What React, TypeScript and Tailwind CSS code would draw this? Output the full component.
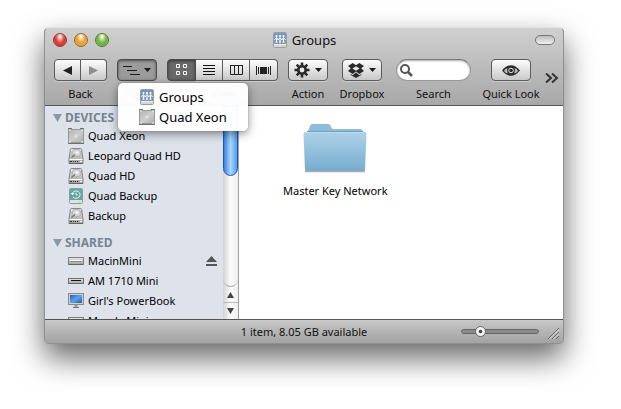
import type { ReactNode } from "react";

type IconName =
  | "volume"
  | "server"
  | "disk"
  | "backup"
  | "mini"
  | "miniDark"
  | "display";

type Item = { title: string; icon: IconName; eject?: boolean };

const devices: Item[] = [
  { title: "Quad Xeon", icon: "volume" },
  { title: "Leopard Quad HD", icon: "disk" },
  { title: "Quad HD", icon: "disk" },
  { title: "Quad Backup", icon: "backup" },
  { title: "Backup", icon: "disk" },
];

const shared: Item[] = [
  { title: "MacinMini", icon: "mini", eject: true },
  { title: "AM 1710 Mini", icon: "miniDark" },
  { title: "Girl's PowerBook", icon: "display" },
  { title: "Mandy Mini", icon: "mini" },
];

const button =
  "flex h-[22px] items-center justify-center border border-[#5c5c5c] bg-linear-to-b from-[#fdfdfd] to-[#c9c9c9] shadow-[0_1px_0_#cfcfcf]";
const pressed =
  "flex h-[22px] items-center justify-center border border-[#4a4a4a] shadow-[inset_0_1px_3px_#00000080]";

function ItemIcon({ name }: { name: IconName }) {
  return (
    <svg width="16" height="16" viewBox="0 0 16 16" className="shrink-0" aria-hidden="true">
      <defs>
        <linearGradient id="metal" x1="0" y1="0" x2="1" y2="1">
          <stop offset="0" stopColor="#b2b2b2" />
          <stop offset="0.5" stopColor="#cdcdcd" />
          <stop offset="1" stopColor="#adadad" />
        </linearGradient>
        <linearGradient id="silver" x1="0" y1="0" x2="0" y2="1">
          <stop offset="0" stopColor="#eaeaea" />
          <stop offset="1" stopColor="#a0a0a0" />
        </linearGradient>
        <linearGradient id="screen" x1="0" y1="0" x2="1" y2="1">
          <stop offset="0" stopColor="#2460b8" />
          <stop offset="0.5" stopColor="#5ba4ea" />
          <stop offset="1" stopColor="#1d56b0" />
        </linearGradient>
      </defs>
      {name === "volume" && (
        <>
          <rect x=".5" y="1.500" width="15" height="13" fill="url(#metal)" stroke="#989898" />
          <path d="M0 .5h4M12 .5h4M0 15.500h16" stroke="#6f6f6f" />
          <path d="M1 2h2M13 2h2M1 14h2M13 14h2" stroke="#f0f0f0" />
          <circle cx="8" cy="8" r="1.500" fill="#e4e4e4" />
        </>
      )}
      {name === "server" && (
        <>
          <rect x="1.500" y=".5" width="13" height="15" rx="1" fill="#d3d7db" stroke="#9b9fa3" />
          <rect x="2" y="1" width="12" height="11" fill="#7896ba" />
          <g fill="#fff">
            <circle cx="4.500" cy="4" r="1.100" />
            <circle cx="8" cy="4" r="1.100" />
            <circle cx="11.500" cy="4" r="1.100" />
          </g>
          <path d="M2.500 8l2-2.500L6.200 8 8 5.500 9.800 8l1.700-2.500 2 2.500" fill="none" stroke="#fff" />
          <path d="M4.500 5L3.500 11h.8l.2-2 .2 2h.8zM8 5L7 11h.8L8 9l.2 2H9zM11.500 5l-1 6h.8l.2-2 .2 2h.8z" fill="#fff" />
          <path d="M2 12.500h12" stroke="#f0f0f0" />
          <path d="M11 14.300h2" stroke="#e5e500" strokeWidth="1.500" />
        </>
      )}
      {name === "disk" && (
        <>
          <path d="M3.500.5h9q1 0 1.100 1l1.400 9.500v4.500H1V11L2.400 1.500q.1-1 1.100-1z" fill="url(#silver)" stroke="#858585" />
          <ellipse cx="8.500" cy="5" rx="4.500" ry="3.700" fill="#d4d4d4" stroke="#a3a3a3" strokeWidth=".8" />
          <ellipse cx="9" cy="4.500" rx="1.500" ry="1.200" fill="#f7f7f7" />
          <path d="M3.500 9.500l3.500-3" stroke="#777" strokeWidth="1.300" />
          <path d="M1.500 11.500h13" stroke="#fafafa" />
          <path d="M2 13.500h2M5 13.500h1M7 13.500h1M9 13.500h1" stroke="#2f2f2f" />
          <path d="M12 13.500h2" stroke="#fff" />
          <path d="M1 15.500h14" stroke="#666" />
        </>
      )}
      {name === "backup" && (
        <>
          <rect x="1.500" y=".5" width="13" height="15" rx="1" fill="#dde3e3" stroke="#8d9b9b" />
          <rect x="2" y="1" width="12" height="11" fill="#62a5a2" />
          <path d="M4.500 5A4 3.700 0 1 1 5 9" fill="none" stroke="#e9f4f3" />
          <path d="M2.800 5l1.700 2.300L6.300 5z" fill="#fff" />
          <path d="M8 4.500V7h2" fill="none" stroke="#fff" strokeWidth=".8" />
          <path d="M11 14h2" stroke="#e5d800" />
        </>
      )}
      {name === "mini" && (
        <>
          <rect x=".5" y="4.500" width="15" height="7" fill="url(#silver)" stroke="#808080" />
          <path d="M2 7.500h12" stroke="#fff" />
          <path d="M2 8.500h12" stroke="#8a8a8a" />
          <path d="M1 11.500h14" stroke="#666" />
        </>
      )}
      {name === "miniDark" && (
        <>
          <rect x=".5" y="5.500" width="15" height="5" fill="url(#silver)" stroke="#6f6f6f" />
          <path d="M3 7.500h10" stroke="#111" />
        </>
      )}
      {name === "display" && (
        <>
          <rect x=".5" y=".5" width="15" height="11" fill="#cfcfcf" stroke="#8b8b8b" />
          <rect x="2" y="2" width="12" height="8" fill="url(#screen)" />
          <path d="M6.500 12h3v2h-3z" fill="#999" />
          <path d="M5 14.500h6" stroke="#777" />
        </>
      )}
    </svg>
  );
}

function Caret() {
  return (
    <svg width="7" height="4" viewBox="0 0 7 4" aria-hidden="true">
      <path d="M0 0h7L3.500 4z" fill="#1c1c1c" />
    </svg>
  );
}

function ToolItem({ label, width, children }: { label: string; width: string; children: ReactNode }) {
  return (
    <div className={`relative flex shrink-0 flex-col items-center gap-[5px] ${width}`}>
      {children}
      <span className="whitespace-nowrap text-[#111]">{label}</span>
    </div>
  );
}

function TitleBar() {
  return (
    <div className="flex h-6 items-center px-2">
      <div className="flex flex-1 gap-[7px]">
        <button aria-label="Close" className="size-[14px] rounded-full border border-[#8c3a36] bg-[radial-gradient(ellipse_at_50%_20%,#ffe5e2_8%,#e8504b_45%,#d8312e_65%,#ffaaa2_100%)]" />
        <button aria-label="Minimize" className="size-[14px] rounded-full border border-[#96652c] bg-[radial-gradient(ellipse_at_50%_20%,#fff1d8_8%,#eda544_45%,#e89a35_65%,#fff08f_100%)]" />
        <button aria-label="Zoom" className="size-[14px] rounded-full border border-[#4d7935] bg-[radial-gradient(ellipse_at_50%_20%,#effbe0_8%,#7cbc52_45%,#6cad45_65%,#d3f79c_100%)]" />
      </div>
      <h1 className="flex items-center gap-1 text-[13px] leading-4 text-[#111]">
        <ItemIcon name="server" />
        Groups
      </h1>
      <div className="flex flex-1 justify-end">
        <button aria-label="Toggle toolbar" className="h-[10px] w-5 rounded-full border border-[#777] bg-linear-to-b from-[#bdbdbd] to-[#f0f0f0]" />
      </div>
    </div>
  );
}

function PathMenu() {
  return (
    <ul className="absolute top-6 left-px z-10 flex w-[130px] flex-col rounded-[5px] bg-white/97 py-1 text-[13px] leading-5 text-black shadow-[0_3px_10px_#00000070,0_0_1px_#00000080]">
      <li>
        <button className="flex h-5 w-full items-center gap-1 pl-[21px]">
          <ItemIcon name="server" />
          Groups
        </button>
      </li>
      <li>
        <button className="flex h-5 w-full items-center gap-1 pl-[21px]">
          <ItemIcon name="volume" />
          Quad Xeon
        </button>
      </li>
    </ul>
  );
}

function Toolbar() {
  return (
    <div className="flex gap-[10px] pt-[7px] pr-1 pl-[9px]">
      <ToolItem label="Back" width="w-[53px]">
        <div className="flex w-full">
          <button aria-label="Back" className={`${button} w-[27px] rounded-l-[4px]`}>
            <svg width="9" height="9" viewBox="0 0 9 9"><path d="M9 0v9L0 4.500z" fill="#222" /></svg>
          </button>
          <button aria-label="Forward" className={`${button} w-[26px] rounded-r-[4px] border-l-0`}>
            <svg width="9" height="9" viewBox="0 0 9 9"><path d="M0 0v9l9-4.500z" fill="#8f8f8f" /></svg>
          </button>
        </div>
      </ToolItem>
      <ToolItem label="Path" width="w-10">
        <button aria-label="Path" className={`${pressed} w-10 gap-1 rounded-[4px] bg-[#9b9b9b]`}>
          <svg width="17" height="11" viewBox="0 0 17 11">
            <path d="M0 1.500h9M4 5.500h10M7 9.500h10" stroke="#1c1c1c" />
          </svg>
          <Caret />
        </button>
        <PathMenu />
      </ToolItem>
      <ToolItem label="View" width="w-[111px]">
        <div className="flex w-full">
          <button aria-label="Icon view" className={`${pressed} w-[29px] rounded-l-[4px] bg-[#696969]`}>
            <svg width="12" height="12" viewBox="0 0 12 12" fill="none" stroke="#fff">
              <path d="M.5.5h3v3h-3zM7.500.5h3v3h-3zM.5 7.500h3v3h-3zM7.500 7.500h3v3h-3z" />
            </svg>
          </button>
          <button aria-label="List view" className={`${button} w-[27px] border-l-0`}>
            <svg width="12" height="11" viewBox="0 0 12 11"><path d="M0 .5h12M0 3.500h12M0 6.500h12M0 9.500h12" stroke="#111" /></svg>
          </button>
          <button aria-label="Column view" className={`${button} w-[27px] border-l-0`}>
            <svg width="13" height="10" viewBox="0 0 13 10"><path d="M.5 0v9.500h12V0M4.500 0v9M8.500 0v9M0 .5h13" stroke="#222" fill="none" /></svg>
          </button>
          <button aria-label="Cover flow" className={`${button} w-7 rounded-r-[4px] border-l-0`}>
            <svg width="15" height="9" viewBox="0 0 15 9">
              <path d="M.5 0v9M2.500 1v7M12.500 1v7M14.500 0v9" stroke="#222" />
              <path d="M4 1h7v7H4z" fill="#222" />
            </svg>
          </button>
        </div>
      </ToolItem>
      <ToolItem label="Action" width="w-10">
        <button aria-label="Action" className={`${button} w-10 gap-[5px] rounded-[4px]`}>
          <svg width="16" height="16" viewBox="0 0 16 16">
            <g stroke="#2a2a2a" strokeWidth="2.600">
              <path d="M8 .5v15M.5 8h15M2.700 2.700l10.600 10.600M13.300 2.700L2.700 13.300" />
            </g>
            <circle cx="8" cy="8" r="5" fill="#2a2a2a" />
            <circle cx="8" cy="8" r="2.400" fill="#e8e8e8" />
          </svg>
          <Caret />
        </button>
      </ToolItem>
      <ToolItem label="Dropbox" width="w-12">
        <button aria-label="Dropbox" className={`${button} w-10 gap-[5px] rounded-[4px]`}>
          <svg width="16" height="15" viewBox="0 0 16 15" fill="#2a2a2a">
            <path d="M4.700 0L8 2.200 11.300 0 16 3l-2.800 2.300L16 8l-4.700 3L8 8.500 4.700 11 0 8l2.800-2.700L0 3z" />
            <path d="M8 9.600l3.300 2.600 2-1.200v1L8 15l-5.300-3v-1l2 1.200z" />
            <path d="M8 3.300l3.600 2.200L8 7.700 4.400 5.500z" fill="#e6e6e6" />
          </svg>
          <Caret />
        </button>
      </ToolItem>
      <div className="flex w-[75px] shrink-0 flex-col items-center gap-[5px]">
        <div className="flex h-[22px] w-full items-center gap-1 rounded-full border border-[#999] border-t-[#777] bg-white px-[3px] shadow-[inset_0_1px_2px_#00000050]">
          <svg width="13" height="13" viewBox="0 0 13 13" className="shrink-0">
            <circle cx="5" cy="5" r="4" fill="none" stroke="#555" strokeWidth="2" />
            <path d="M8 8l4 4" stroke="#555" strokeWidth="2.500" />
          </svg>
          <input id="search" type="text" className="w-full min-w-0 bg-transparent outline-none" />
        </div>
        <label htmlFor="search" className="text-[#111]">Search</label>
      </div>
      <div className="flex flex-1 justify-between">
        <ToolItem label="Quick Look" width="w-[60px]">
          <button aria-label="Quick Look" className={`${button} w-10 rounded-[4px]`}>
            <svg width="18" height="11" viewBox="0 0 18 11">
              <path d="M0 5.500Q9-5 18 5.500 9 16 0 5.500z" fill="#2a2a2a" />
              <path d="M2 6Q3 3.500 5.500 3 4.500 6 6 8.500 3.500 8 2 6zM16 6q-1-2.500-3.500-3Q13.500 6 12 8.500q2.500-.5 4-2.500z" fill="#bbb" />
              <circle cx="9" cy="5.500" r="2.300" fill="none" stroke="#e8e8e8" />
            </svg>
          </button>
        </ToolItem>
        <button aria-label="More" className="mt-[14px] h-[10px]">
          <svg width="14" height="10" viewBox="0 0 14 10" fill="none" stroke="#333" strokeWidth="2">
            <path d="M1 .5L6 5 1 9.500M7 .5L12 5 7 9.500" />
          </svg>
        </button>
      </div>
    </div>
  );
}

function SidebarGroup({ title, items }: { title: string; items: Item[] }) {
  return (
    <section>
      <h2 className="flex h-4 items-center gap-[3px] pl-2 text-[12px] font-bold text-[#758392]">
        <svg width="9" height="8" viewBox="0 0 9 8"><path d="M0 0h9L4.500 8z" fill="#8a97a5" /></svg>
        {title}
      </h2>
      <ul>
        {items.map((item) => (
          <li key={item.title} className="flex h-5 items-center pr-[6px] pl-[23px]">
            <a href="#" className="flex flex-1 items-center gap-1 whitespace-nowrap">
              <ItemIcon name={item.icon} />
              {item.title}
            </a>
            {item.eject && (
              <button aria-label="Eject">
                <svg width="11" height="10" viewBox="0 0 11 10" fill="#555"><path d="M5.500 0L11 6H0zM0 8h11v2H0z" /></svg>
              </button>
            )}
          </li>
        ))}
      </ul>
    </section>
  );
}

function ScrollBar() {
  return (
    <div className="flex w-4 shrink-0 flex-col border-r border-[#a0a0a0] bg-linear-to-r from-[#d2d2d2] via-[#fafafa] to-[#efefef]">
      <div className="flex flex-1 flex-col rounded-b-full border-b border-[#aaa]">
        <div className="h-[70px] rounded-b-full border border-[#2457a8] bg-linear-to-r from-[#3a7fe0] via-[#a9d8fb] to-[#4f9df0]" />
      </div>
      <button aria-label="Scroll up" className="flex h-4 items-center justify-center border-b border-[#bbb]">
        <svg width="7" height="6" viewBox="0 0 7 6"><path d="M3.500 0L7 6H0z" fill="#444" /></svg>
      </button>
      <button aria-label="Scroll down" className="flex h-4 items-center justify-center">
        <svg width="7" height="6" viewBox="0 0 7 6"><path d="M0 0h7L3.500 6z" fill="#444" /></svg>
      </button>
    </div>
  );
}

function Folder() {
  return (
    <svg width="64" height="50" viewBox="0 0 64 50" aria-hidden="true">
      <defs>
        <linearGradient id="folder" x1="0" y1="0" x2="0" y2="1">
          <stop offset="0" stopColor="#add2e8" />
          <stop offset="1" stopColor="#76acd0" />
        </linearGradient>
      </defs>
      <path d="M2 48.500h60" stroke="#777" strokeWidth="1.500" opacity=".6" />
      <path d="M5 12V7q1.500-1 2-4 .5-2 2-2h16q2.500 0 3 3 .3 2 3 2h26q2 0 3 2v4z" fill="#8fbdd9" />
      <path d="M2 9h60q1.500 0 1.500 2L62 47q0 1-1 1H3q-1 0-1-1L.5 11Q.5 9 2 9z" fill="url(#folder)" />
      <path d="M4 8.500h56" stroke="#6f9fbe" />
      <path d="M2 9.500h60" stroke="#b9dbee" />
    </svg>
  );
}

export default function App() {
  return (
    <main className="h-screen overflow-hidden bg-white pt-[27px] pr-[57px] pb-[65px] pl-11 font-['Noto_Sans',sans-serif] text-[11px] leading-4 text-black">
      <div className="flex h-full flex-col rounded-[5px] border border-[#8f8f8f] border-t-[#e2e2e2] bg-[#bdbdbd] shadow-[0_14px_30px_#00000099]">
        <header className="h-[78px] shrink-0 rounded-t-[5px] border-b border-[#555] bg-linear-to-b from-[#d0d0d0] to-[#a8a8a8]">
          <TitleBar />
          <Toolbar />
        </header>
        <div className="flex min-h-0 flex-1">
          <nav className="flex w-[178px] shrink-0 flex-col gap-[9px] overflow-hidden bg-[#dee3eb] pt-1">
            <SidebarGroup title="DEVICES" items={devices} />
            <SidebarGroup title="SHARED" items={shared} />
          </nav>
          <ScrollBar />
          <div className="flex-1 overflow-hidden bg-white pt-[17px] pl-11">
            <button className="flex flex-col items-center gap-[10px]">
              <Folder />
              Master Key Network
            </button>
          </div>
        </div>
        <footer className="flex h-6 shrink-0 items-center rounded-b-[4px] border-t border-[#555] bg-linear-to-b from-[#c8c8c8] to-[#a2a2a2] pr-1 pl-1">
          <div className="flex-1" />
          <span className="text-[#111]">1 item, 8.05 GB available</span>
          <div className="flex flex-1 items-center justify-end gap-[9px]">
            <input
              type="range"
              aria-label="Icon size"
              defaultValue={20}
              className="h-[5px] w-[78px] appearance-none rounded-full border border-[#666] bg-[#8b8b8b] [&::-webkit-slider-thumb]:size-[11px] [&::-webkit-slider-thumb]:appearance-none [&::-webkit-slider-thumb]:rounded-full [&::-webkit-slider-thumb]:border [&::-webkit-slider-thumb]:border-[#666] [&::-webkit-slider-thumb]:bg-[radial-gradient(circle,#444_20%,#f4f4f4_35%)]"
            />
            <svg width="11" height="11" viewBox="0 0 11 11" className="mt-1">
              <path d="M0 11L11 0M4 11l7-7M8 11l3-3" stroke="#666" />
              <path d="M1 11.500L11.500 1M5 11.500L11.500 5" stroke="#ddd" />
            </svg>
          </div>
        </footer>
      </div>
    </main>
  );
}
